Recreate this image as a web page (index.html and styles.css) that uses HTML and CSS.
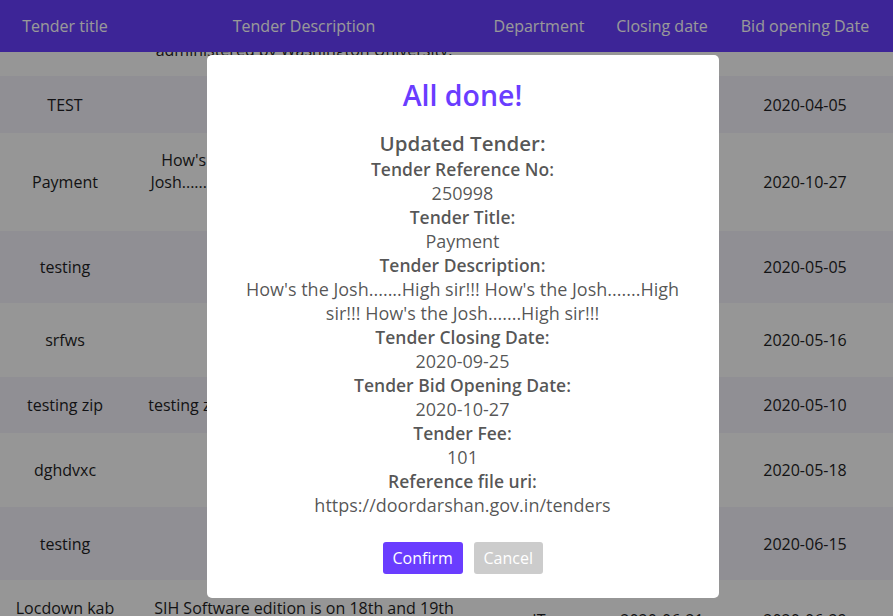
FILE: index.html
```html
<!DOCTYPE html>
<html lang="en">
<head>
<meta charset="utf-8">
<title>Tenders</title>
<link rel="stylesheet" href="styles.css">
</head>
<body>
<div class="page">
  <div class="thead">
    <div class="cell">Tender title</div>
    <div class="cell">Tender Description</div>
    <div class="cell">Department</div>
    <div class="cell">Closing date</div>
    <div class="cell">Bid opening Date</div>
    <div class="cell"></div>
  </div>
  <div class="tbody">
    <div class="row even partial">
      <div class="cell"></div>
      <div class="cell desc"><span class="cutline">administered by Washington University.</span></div>
      <div class="cell"></div><div class="cell"></div><div class="cell"></div><div class="cell"></div>
    </div>
    <div class="row odd h57">
      <div class="cell">TEST</div>
      <div class="cell">test tender</div>
      <div class="cell">IT</div>
      <div class="cell">2020-03-30</div>
      <div class="cell">2020-04-05</div>
      <div class="cell"></div>
    </div>
    <div class="row even h98">
      <div class="cell">Payment</div>
      <div class="cell">How's the Josh.......High sir!!! How's the Josh.......High sir!!! How's the Josh.......High sir!!!</div>
      <div class="cell">IT</div>
      <div class="cell">2020-09-25</div>
      <div class="cell">2020-10-27</div>
      <div class="cell"></div>
    </div>
    <div class="row odd h72">
      <div class="cell">testing</div>
      <div class="cell">testing</div>
      <div class="cell">IT</div>
      <div class="cell">2020-04-30</div>
      <div class="cell">2020-05-05</div>
      <div class="cell"></div>
    </div>
    <div class="row even h74">
      <div class="cell">srfws</div>
      <div class="cell">sfsfs</div>
      <div class="cell">IT</div>
      <div class="cell">2020-05-10</div>
      <div class="cell">2020-05-16</div>
      <div class="cell"></div>
    </div>
    <div class="row odd h56">
      <div class="cell">testing zip</div>
      <div class="cell">testing zip file upload with the documents</div>
      <div class="cell">IT</div>
      <div class="cell">2020-05-05</div>
      <div class="cell">2020-05-10</div>
      <div class="cell"></div>
    </div>
    <div class="row even h74">
      <div class="cell">dghdvxc</div>
      <div class="cell">dhfdg</div>
      <div class="cell">IT</div>
      <div class="cell">2020-05-12</div>
      <div class="cell">2020-05-18</div>
      <div class="cell"></div>
    </div>
    <div class="row odd h73">
      <div class="cell">testing</div>
      <div class="cell">testing</div>
      <div class="cell">IT</div>
      <div class="cell">2020-06-10</div>
      <div class="cell">2020-06-15</div>
      <div class="cell"></div>
    </div>
    <div class="row even h80">
      <div class="cell">Locdown kab khulega</div>
      <div class="cell">SIH Software edition is on 18th and 19th July 2020</div>
      <div class="cell">IT</div>
      <div class="cell">2020-06-21</div>
      <div class="cell">2020-06-29</div>
      <div class="cell"></div>
    </div>
  </div>
</div>

<div class="overlay">
  <div class="modal">
    <div class="title">All done!</div>
    <div class="text">
      <div class="heading">Updated Tender:</div>
      <div class="label">Tender Reference No:</div>
      <div class="value">250998</div>
      <div class="label">Tender Title:</div>
      <div class="value">Payment</div>
      <div class="label">Tender Description:</div>
      <div class="value">How's the Josh.......High sir!!! How's the Josh.......High sir!!! How's the Josh.......High sir!!!</div>
      <div class="label">Tender Closing Date:</div>
      <div class="value">2020-09-25</div>
      <div class="label">Tender Bid Opening Date:</div>
      <div class="value">2020-10-27</div>
      <div class="label">Tender Fee:</div>
      <div class="value">101</div>
      <div class="label">Reference file uri:</div>
      <div class="value">https://doordarshan.gov.in/tenders</div>
    </div>
    <div class="actions">
      <button class="btn confirm">Confirm</button>
      <button class="btn cancel">Cancel</button>
    </div>
  </div>
</div>
</body>
</html>
```

FILE: styles.css
```css
html, body {
  margin: 0;
  padding: 0;
  height: 100%;
  overflow: hidden;
}
body {
  font-family: "Open Sans", "Noto Sans", sans-serif;
  font-size: 16px;
  color: #1e1e24;
  background: #fafafa;
}
.page {
  width: 893px;
}
.thead, .row {
  display: grid;
  grid-template-columns: 130px 348px 122px 124px 162px 1fr;
}
.thead {
  height: 52px;
  background: #663efc;
  color: #ffffff;
  align-items: center;
}
.cell {
  text-align: center;
  padding: 0 12px;
  line-height: 22px;
}
.row {
  align-items: center;
  overflow: hidden;
}
.row.even { background: #fafafa; }
.row.odd { background: #f0eef7; }
.partial {
  height: 24px;
  align-items: start;
}
.cutline {
  display: block;
  margin-top: -13px;
  white-space: nowrap;
}
.h56 { height: 56px; }
.h57 { height: 57px; }
.h72 { height: 72px; }
.h73 { height: 73px; }
.h74 { height: 74px; }
.h80 { height: 80px; }
.h80 .cell { line-height: 24px; }
.h98 { height: 98px; }

.overlay {
  position: fixed;
  inset: 0;
  background: rgba(0, 0, 0, 0.4);
  display: flex;
  justify-content: center;
  align-items: flex-start;
  padding: 55px 0 0 32px;
}
.modal {
  width: 512px;
  height: 543px;
  box-sizing: border-box;
  background: #ffffff;
  border-radius: 5px;
  padding: 20px 30px 0;
  text-align: center;
}
.title {
  font-size: 28.5px;
  line-height: 40px;
  font-weight: 600;
  color: #6a3dff;
}
.text {
  margin-top: 14px;
  color: rgba(0, 0, 0, 0.68);
  font-size: 18px;
  line-height: 24px;
}
.heading {
  font-size: 20.5px;
  line-height: 28px;
  font-weight: 600;
}
.label {
  font-weight: 600;
  font-size: 17.5px;
}
.actions {
  margin-top: 25px;
  display: flex;
  justify-content: center;
  gap: 11px;
}
.btn {
  font-family: "Open Sans", "Noto Sans", sans-serif;
  font-size: 16px;
  height: 32px;
  border: none;
  border-radius: 3px;
  color: #ffffff;
  padding: 0 10px;
}
.confirm {
  background: #6a3dff;
  width: 80px;
}
.cancel {
  background: #cccccc;
  width: 69px;
}
```
